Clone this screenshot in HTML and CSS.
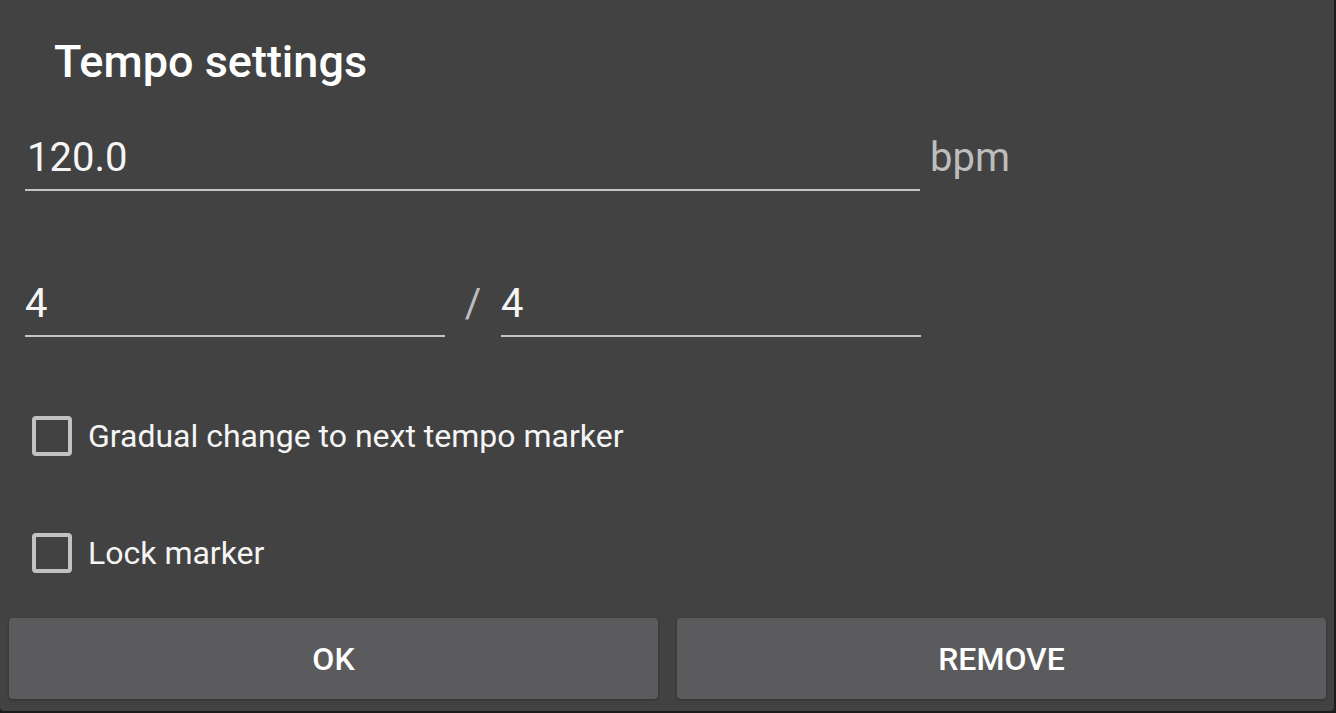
FILE: index.html
```html
<!DOCTYPE html>
<html>
<head>
<meta charset="utf-8">
<link rel="stylesheet" href="styles.css">
</head>
<body>
<div class="dialog">
  <div class="title">Tempo settings</div>
  <div class="row row-tempo">
    <div class="field field-tempo">120.0</div>
    <div class="unit">bpm</div>
  </div>
  <div class="row row-sig">
    <div class="field field-half">4</div>
    <div class="slash">/</div>
    <div class="field field-half">4</div>
  </div>
  <div class="check check-first">
    <span class="box"></span>
    <span class="label">Gradual change to next tempo marker</span>
  </div>
  <div class="check check-second">
    <span class="box"></span>
    <span class="label">Lock marker</span>
  </div>
  <div class="buttons">
    <div class="btn">OK</div>
    <div class="btn">REMOVE</div>
  </div>
</div>
</body>
</html>
```
FILE: styles.css
```css
html, body {
  margin: 0;
  padding: 0;
  background: #1c1c1c;
}
body {
  width: 1336px;
  height: 713px;
  overflow: hidden;
  font-family: Roboto, "Noto Sans", sans-serif;
}
.dialog {
  width: 1334px;
  height: 711px;
  background: #424242;
  border-radius: 0 0 4px 4px;
  display: flex;
  flex-direction: column;
}
.title {
  padding: 36px 0 0 54px;
  font-size: 45px;
  line-height: 52px;
  font-weight: 500;
  color: #ffffff;
}
.row {
  display: flex;
  align-items: baseline;
  padding-left: 25px;
}
.row-tempo {
  margin-top: 46px;
}
.row-sig {
  margin-top: 89px;
}
.field {
  font-size: 40px;
  line-height: 48px;
  padding-bottom: 7px;
  border-bottom: 2px solid #c4c4c4;
  color: #f5f5f5;
  box-sizing: border-box;
}
.field-tempo {
  width: 895px;
  padding-left: 2px;
}
.field-half {
  width: 420px;
}
.unit {
  margin-left: 10px;
  font-size: 40px;
  line-height: 48px;
  color: #bdbdbd;
}
.slash {
  width: 56px;
  text-align: center;
  font-size: 40px;
  line-height: 48px;
  color: #bdbdbd;
}
.check {
  display: flex;
  align-items: center;
  padding-left: 32px;
  height: 40px;
}
.check-first {
  margin-top: 79px;
}
.check-second {
  margin-top: 77px;
}
.box {
  width: 40px;
  height: 40px;
  box-sizing: border-box;
  border: 4px solid #c2c2c2;
  border-radius: 4px;
}
.label {
  margin-left: 16px;
  font-size: 32px;
  line-height: 40px;
  color: #f5f5f5;
}
.buttons {
  display: flex;
  gap: 19px;
  padding: 0 8px 0 9px;
  margin-top: 45px;
}
.btn {
  flex: 1;
  height: 81px;
  background: #5b5b5d;
  border-radius: 4px;
  box-shadow: 0 1px 3px rgba(0, 0, 0, 0.3);
  display: flex;
  align-items: center;
  justify-content: center;
  font-size: 32px;
  font-weight: 500;
  color: #ffffff;
}
```
